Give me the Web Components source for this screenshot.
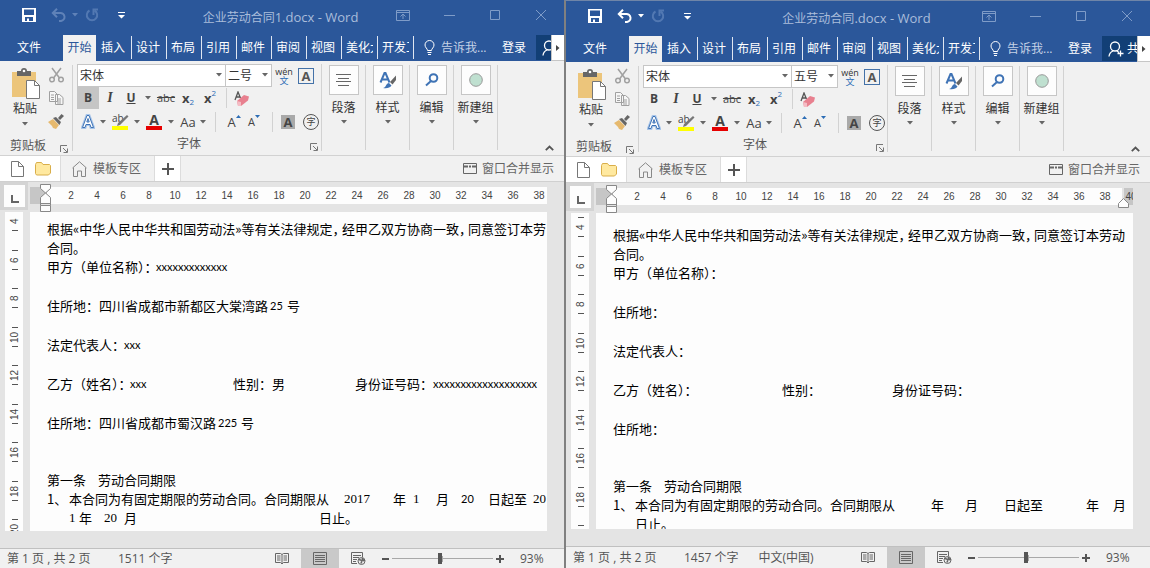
<!DOCTYPE html>
<html lang="zh-CN">
<head>
<meta charset="utf-8">
<title>Word</title>
<style>
  html, body { height: 100%; }
  body {
    margin: 0;
    background: #808080;
    font-family: "Open Sans", "Noto Sans CJK SC", sans-serif;
    font-size: 12px;
    line-height: 16px;
    color: #444;
  }
</style>
</head>
<body>
<split-desktop>
  <word-window name="企业劳动合同" suffix="1.docx - Word" size="二号" words="1511 个字" bold>
    <doc-line tight cols="295 126 auto"><span>根据«中华人民中华共和国劳动法»等有关法律规定，</span><span>经甲乙双方协商一致，</span><span>同意签订本劳</span></doc-line>
    <doc-line>合同。</doc-line>
    <doc-line cols="109 auto"><span>甲方（单位名称）：</span><latin-text>xxxxxxxxxxxxx</latin-text></doc-line>
    <doc-line blank></doc-line>
    <doc-line cols="223 17 auto"><span>住所地：四川省成都市新都区大棠湾路</span><latin-text>25</latin-text><span>号</span></doc-line>
    <doc-line blank></doc-line>
    <doc-line cols="77 auto"><span>法定代表人：</span><latin-text>xxx</latin-text></doc-line>
    <doc-line blank></doc-line>
    <doc-line cols="83 103 39 83 78 auto"><span>乙方（姓名）：</span><latin-text>xxx</latin-text><span>性别：</span><span>男</span><span>身份证号码：</span><latin-text>xxxxxxxxxxxxxxxxxxx</latin-text></doc-line>
    <doc-line blank></doc-line>
    <doc-line cols="171 23 auto"><span>住所地：四川省成都市蜀汉路</span><latin-text>225</latin-text><span>号</span></doc-line>
    <doc-line></doc-line>
    <doc-line></doc-line>
    <doc-line cols="51 auto"><span>第一条</span><span>劳动合同期限</span></doc-line>
    <doc-line cols="22 275 49 20 23 25 27 45 auto"><span>1、</span><span>本合同为有固定期限的劳动合同。合同期限从</span><serif-text>2017</serif-text><span>年</span><serif-text>1</serif-text><span>月</span><latin-text>20</latin-text><span>日起至</span><serif-text>20</serif-text></doc-line>
    <doc-line cols="22 10 25 20 195 auto"><span></span><serif-text>1</serif-text><span>年</span><serif-text>20</serif-text><span>月</span><span>日止。</span></doc-line>
  </word-window>
  <word-window class="active" name="企业劳动合同" suffix=".docx - Word" size="五号" words="1457 个字" language="中文(中国)" undoable wide>
    <doc-line tight cols="295 126 auto"><span>根据«中华人民中华共和国劳动法»等有关法律规定，</span><span>经甲乙双方协商一致，</span><span>同意签订本劳动</span></doc-line>
    <doc-line>合同。</doc-line>
    <doc-line>甲方（单位名称）：</doc-line>
    <doc-line blank></doc-line>
    <doc-line>住所地：</doc-line>
    <doc-line blank></doc-line>
    <doc-line>法定代表人：</doc-line>
    <doc-line blank></doc-line>
    <doc-line cols="169 110 auto"><span>乙方（姓名）：</span><span>性别：</span><span>身份证号码：</span></doc-line>
    <doc-line blank></doc-line>
    <doc-line>住所地：</doc-line>
    <doc-line></doc-line>
    <doc-line></doc-line>
    <doc-line cols="51 auto"><span>第一条</span><span>劳动合同期限</span></doc-line>
    <doc-line cols="22 296 34 39 82 27 auto"><span>1、</span><span>本合同为有固定期限的劳动合同。合同期限从</span><span>年</span><span>月</span><span>日起至</span><span>年</span><span>月</span></doc-line>
    <doc-line cols="22 auto"><span></span><span>日止。</span></doc-line>
  </word-window>
</split-desktop>

<script>
/* Shared reset for every shadow root */
const RESET = `
  *, *::before, *::after { box-sizing: border-box; }
  :host { box-sizing: border-box; }
  button { font: inherit; color: inherit; background: none; border: 0; padding: 0; margin: 0; display: flex; align-items: center; justify-content: center; }
  svg { display: block; flex: none; }
  a { color: inherit; text-decoration: none; }
`;

class Base extends HTMLElement {
  constructor() {
    super();
    this.attachShadow({ mode: 'open' });
  }
  connectedCallback() {
    this.shadowRoot.innerHTML = `<style>${RESET}${this.css()}</style>${this.html()}`;
  }
  css() { return ''; }
  html() { return '<slot></slot>'; }
}

const caret = (color = '#666') => `<svg width="6" height="4" viewBox="0 0 6 4"><path d="M0 0h6L3 3.5z" fill="${color}"/></svg>`;
const launcher = '<svg class="launch" width="8" height="8" viewBox="0 0 8 8" fill="none" stroke="#777"><path d="M.5 7V.5H7M3 3l4 4M7.500 3.500v4h-4"/></svg>';

customElements.define('split-desktop', class extends Base {
  css() { return `
    :host { display: grid; grid-template-columns: 564fr 586fr; height: 100vh; overflow: hidden; }
    ::slotted(*) { min-width: 0; min-height: 0; }
    ::slotted(.active) { border-left: 2px solid #808080; border-top: 1px solid #6f85a8; --scroll: 5px; --status-height: 22px; }
  `; }
});

customElements.define('word-window', class extends Base {
  css() { return `
    :host { display: flex; flex-direction: column; background: #e4e4e4; overflow: hidden; }
    word-canvas { flex: 1; min-height: 0; }
  `; }
  html() {
    const a = n => this.getAttribute(n) || '';
    return `
      <title-bar name="${a('name')}" suffix="${a('suffix')}" ${this.hasAttribute('undoable') ? 'undoable' : ''}></title-bar>
      <ribbon-tabs></ribbon-tabs>
      <ribbon-panel size="${a('size')}" ${this.hasAttribute('bold') ? 'bold' : ''}></ribbon-panel>
      <document-tabs></document-tabs>
      <word-canvas ${this.hasAttribute('wide') ? 'wide' : ''}><slot></slot></word-canvas>
      <status-bar words="${a('words')}" language="${a('language')}"></status-bar>`;
  }
});

customElements.define('title-bar', class extends Base {
  css() { return `
    :host { display: grid; grid-template-columns: 1fr auto 1fr; height: 35px; background: #2b579a; color: #aabddb; }
    .quick { display: flex; align-items: center; height: 30px; padding-left: 18px; }
    .quick button { width: 22px; height: 22px; }
    .quick .undo { margin-left: 7px; }
    .quick .drop { width: 12px; }
    .quick .more { margin-left: 7px; }
    h1 { margin: 0; padding-right: 3px; font-size: 12px; font-weight: 400; line-height: 35px; white-space: nowrap; }
    h1 span { font-size: 13px; }
    .win { display: flex; justify-content: flex-end; height: 30px; }
    .win button { width: 46px; flex: none; }
  `; }
  html() {
    const u = this.hasAttribute('undoable') ? '#fff' : '#5f82b8';
    return `
    <div class="quick">
      <button aria-label="保存"><svg width="14" height="14" viewBox="0 0 14 14"><path fill="#fff" fill-rule="evenodd" d="M0 0h14v14H0zM2 1.500v5.500h10V1.500zM3 9v4h2v-2.500h2V13h4V9z"/></svg></button>
      <button class="undo" aria-label="撤消"><svg width="15" height="14" viewBox="0 0 15 14" fill="none" stroke="${u}" stroke-width="2"><path d="M2 5h7a4 4 0 0 1 1 8H8"/><path d="M6 .8L1.800 5 6 9.200"/></svg></button>
      <button class="drop" aria-label="撤消列表">${caret(u)}</button>
      <button aria-label="重复"><svg width="14" height="14" viewBox="0 0 14 14" fill="none" stroke="#5278b2" stroke-width="2"><path d="M4.500 2.500a5.200 5.200 0 1 0 5 0"/><path d="M8.500 7V1.500H13"/></svg></button>
      <button class="more" aria-label="自定义快速访问工具栏"><svg width="7" height="7" viewBox="0 0 7 7" fill="#fff"><path d="M0 0h7v1H0zM0 3h7L3.500 6.500z"/></svg></button>
    </div>
    <h1>${this.getAttribute('name')}<span>${this.getAttribute('suffix')}</span></h1>
    <div class="win">
      <button aria-label="功能区显示选项"><svg width="14" height="11" viewBox="0 0 14 11" fill="none" stroke="#7f9cc8"><path d="M.5.5h13v10H.5zM.5 2.500h13M7 9V4M4.500 6.500L7 4l2.500 2.500"/></svg></button>
      <button aria-label="最小化"><svg width="11" height="10" viewBox="0 0 11 10" stroke="#7f9cc8"><path d="M0 5.500h11"/></svg></button>
      <button aria-label="最大化"><svg width="10" height="10" viewBox="0 0 10 10" fill="none" stroke="#7f9cc8"><path d="M.5.5h9v9h-9z"/></svg></button>
      <button aria-label="关闭"><svg width="10" height="10" viewBox="0 0 10 10" stroke="#7f9cc8"><path d="M0 0l10 10M10 0L0 10"/></svg></button>
    </div>`;
  }
});

customElements.define('ribbon-tabs', class extends Base {
  css() { return `
    :host { display: flex; height: 26px; background: #2b579a; color: #fff; white-space: nowrap; overflow: hidden; line-height: 25px; }
    a, button { flex: none; }
    .file { width: 63px; padding-left: 17px; }
    .on { width: 33px; background: #f1f1f1; color: #2b579a; text-align: center; }
    nav { display: flex; flex: none; }
    nav .t { width: 35px; padding-left: 4px; padding-right: 4px; overflow: hidden; border-right: 1px solid #dfe6f1; height: 23px; margin-top: 1px; line-height: 23px; }
    nav .t.first { width: 36px; padding-left: 5px; }
    nav .t.cut { width: 36px; }
    nav .t span { display: block; overflow: hidden; }
    .tell { display: flex; align-items: center; justify-content: flex-start; gap: 6px; padding-left: 10px; width: 82px; color: #c5d2e6; height: 25px; }
    .login { width: 40px; height: 25px; justify-content: flex-start; padding-left: 6px; }
    .share { flex: 1 1 0; min-width: 0; display: flex; justify-content: flex-start; gap: 3px; padding-left: 6px; background: #123f76; overflow: hidden; height: 25px; }
    .share span { flex: none; }
    .next { width: 13px; background: #fff; border: 1px solid #c6c6c6; border-width: 0 0 1px 1px; }
  `; }
  html() {
    const tabs = ['插入', '设计', '布局', '引用', '邮件', '审阅', '视图', '美化大', '开发工'];
    return `
    <nav>
      <a href="#file" class="file">文件</a><a href="#home" class="on">开始</a>
      ${tabs.map((t, i) => `<a href="#t${i}" class="t ${i === 0 ? 'first' : ''} ${i > 6 ? 'cut' : ''}"><span>${t}</span></a>`).join('')}
    </nav>
    <button class="tell"><svg width="11" height="15" viewBox="0 0 11 15" fill="none" stroke="#fff"><path d="M3.500 10.500c0-2-2.500-2.800-2.500-5.500a4.500 4.500 0 0 1 9 0c0 2.700-2.500 3.500-2.500 5.500zM3.500 12.500h4M4 14.500h3"/></svg>告诉我...</button>
    <button class="login">登录</button>
    <button class="share"><svg width="16" height="16" viewBox="0 0 16 16" fill="none" stroke="#fff" stroke-width="1.300"><circle cx="7" cy="5.500" r="4.500"/><path d="M1 15.500c.3-3 1.800-4.600 4-5.500M9 10l2 1.500M12.500 9.500v6M9.500 12.500h6"/></svg><span>共享</span></button>
    <button class="next" aria-label="更多选项卡"><svg width="4" height="6" viewBox="0 0 4 6"><path d="M0 0v6l3.500-3z" fill="#444"/></svg></button>`;
  }
});

/* One collapsed ribbon group: icon tile, label, arrow */
customElements.define('group-button', class extends Base {
  css() { return `
    :host { display: block; width: 44px; height: 85px; border-right: 1px solid #d2d2d2; flex: none; }
    button { flex-direction: column; width: 43px; white-space: nowrap; color: #333; }
    .tile { width: 30px; height: 30px; background: #fdfdfd; border: 1px solid #c6c6c6; display: flex; align-items: center; justify-content: center; margin-bottom: 5px; }
    .label { margin-bottom: 4px; }
  `; }
  html() { return `<button><span class="tile"><slot></slot></span><span class="label">${this.getAttribute('label')}</span>${caret()}</button>`; }
});

customElements.define('ribbon-panel', class extends Base {
  css() { return `
    :host { display: flex; height: 95px; background: #f1f1f1; border-bottom: 1px solid #d2d2d2; padding-top: 4px; }
    .clip { width: 73px; height: 86px; border-right: 1px solid #d2d2d2; display: grid; grid-template-columns: 48px 1fr; grid-template-rows: 70px 1fr; flex: none; color: #333; }
    .paste { flex-direction: column; justify-content: flex-start; padding: 3px 0 0 2px; }
    .paste span { margin: 2px 0 5px; }
    .mini { display: flex; flex-direction: column; gap: 7px; padding-top: 2px; align-items: center; padding-right: 8px; }
    .mini button { width: 16px; height: 16px; }
    .foot { display: flex; align-items: center; justify-content: space-between; color: #555; padding-top: 1px; }
    .foot .launch { align-self: flex-end; }
    .clip .foot { grid-column: 1 / 3; padding-left: 10px; padding-right: 4px; }
    .clip .launch { margin-bottom: 1px; }
    .font { width: 249px; height: 87px; border-right: 1px solid #d2d2d2; flex: none; padding-left: 4px; margin-top: -1px; }
    .row { display: flex; align-items: center; }
    .r1 { height: 23px; } .r2 { height: 22px; } .r3 { height: 25px; }
    .pick { position: relative; flex: none; }
    .pick svg { position: absolute; right: 4px; top: 9px; pointer-events: none; }
    select { appearance: none; font: inherit; font-size: 12px; color: #333; width: 100%; height: 23px; background: #fff; border: 1px solid #c6c6c6; border-radius: 0; padding: 0 2px; margin: 0; display: block; }
    .name { width: 149px; } .size { width: 47px; margin-left: -1px; }
    .py { width: 18px; margin-left: 3px; flex-direction: column; font-size: 9px; line-height: 9px; color: #333; }
    .py b { font-weight: 400; color: #2b6cb5; }
    .box { width: 16px; height: 16px; border: 1px solid #4472a8; margin-left: 5px; font-weight: 700; font-size: 13px; line-height: 14px; color: #555; }
    .g { height: 22px; flex: none; color: #444; }
    .w8 { width: 8px; } .w14 { width: 14px; } .w20 { width: 20px; } .w22 { width: 22px; } .w26 { width: 26px; }
    .pressed { background: #c5c5c5; }
    .b { font-weight: 700; } .i { font-style: italic; font-family: "Liberation Serif", serif; font-size: 14px; font-weight: 700; } .u { font-weight: 700; text-decoration: underline; }
    .s { text-decoration: line-through; font-size: 11px; }
    .x { font-weight: 700; font-size: 13px; }
    .x small { font-size: 8px; line-height: 8px; color: #2b6cb5; font-weight: 400; }
    .x .sub { align-self: flex-end; margin-bottom: 3px; } .x .sup { align-self: flex-start; margin-top: 2px; }
    .sep { width: 1px; height: 20px; background: #d2d2d2; flex: none; margin: 0 5px; }
    .sep.roomy { margin: 0 8px; }
    .red { flex-direction: column; font-weight: 700; font-size: 14px; line-height: 12px; }
    .red::after { content: ""; width: 16px; height: 4px; background: #e60000; }
    .case { font-size: 13px; margin-left: 2px; }
    .grow { font-size: 13px; }
    .grow.small { font-size: 11px; }
    .grow svg { align-self: flex-start; margin-top: 4px; }
    .shade { width: 14px; height: 14px; background: #a9a9a9; font-weight: 700; font-size: 13px; line-height: 14px; color: #444; margin: 0 8px 0 0; flex: none; }
    .ring { width: 16px; height: 16px; border: 1px solid #555; border-radius: 8px; font-size: 9px; line-height: 14px; color: #444; flex: none; }
    .font .foot { height: 17px; padding: 1px 3px 0 100px; }
    .foot span { margin-top: 2px; }
    .fold { margin-left: auto; align-self: flex-end; margin-right: 10px; margin-bottom: 4px; flex: none; }
  `; }
  html() {
    const size = this.getAttribute('size');
    return `
    <div class="clip">
      <button class="paste"><svg width="29" height="31" viewBox="0 0 29 31"><path fill="#ecc57b" d="M1 4h24v25H1z"/><path fill="#666" d="M6 3h4a3 3 0 0 1 6 0h4v5H6z"/><circle cx="13" cy="3" r="1.300" fill="#fff"/><path fill="#fff" stroke="#777" d="M15.500 12.500h8l5 5v13h-13z"/><path d="M23.500 12.500v5h5" fill="none" stroke="#777"/></svg><span>粘贴</span>${caret()}</button>
      <div class="mini">
        <button aria-label="剪切"><svg width="15" height="16" viewBox="0 0 15 16" fill="none" stroke="#a0a0a0" stroke-width="1.500"><circle cx="3" cy="12.500" r="2.300"/><circle cx="12" cy="12.500" r="2.300"/><path d="M3 1l7.500 10M12 1L4.500 11"/></svg></button>
        <button aria-label="复制"><svg width="16" height="14" viewBox="0 0 16 14" fill="#f6f6f6" stroke="#a0a0a0"><path d="M1.500.5h5l3 3v7h-8zM7.500 3.500h4l3.500 3v7H7.500zM3 4h3M3 6.500h3M3 8.500h3M9 8h4M9 10h4M9 12h4"/></svg></button>
        <button aria-label="格式刷"><svg width="16" height="15" viewBox="0 0 16 15"><path fill="#e6b96e" d="M0 8l5-3 6 6-3 4-3-1-1-2z"/><path fill="#666" d="M5 4l3-1 5 5-1.500 3zM10 4l3.500-4L16 2l-4 4z"/></svg></button>
      </div>
      <div class="foot"><span>剪贴板</span>${launcher}</div>
    </div>
    <div class="font">
      <div class="row r1">
        <div class="pick name"><select aria-label="字体"><option>宋体</option></select>${caret()}</div>
        <div class="pick size"><select aria-label="字号"><option>${size}</option></select>${caret()}</div>
        <button class="py"><span>wén</span><b>文</b></button>
        <button class="box">A</button>
      </div>
      <div class="row r2">
        <button class="g w22 b ${this.hasAttribute('bold') ? 'pressed' : ''}">B</button>
        <button class="g w22 i">I</button><button class="g w20 u">U</button><button class="g w14" aria-label="下划线样式">${caret()}</button>
        <button class="g w22 s">abc</button>
        <button class="g w22 x">x<small class="sub">2</small></button><button class="g w22 x">x<small class="sup">2</small></button>
        <span class="sep"></span>
        <button class="g w20" aria-label="清除格式"><svg width="16" height="15" viewBox="0 0 16 15"><path d="M1 9l3-8 2.500 6M2 6h4" fill="none" stroke="#555" stroke-width="1.300"/><path fill="#e8808f" d="M3 10l7-6 5 1.500-1 4L7 15H4z"/><path fill="#f4bcc4" d="M3 10l4 1v4H4z"/></svg></button>
      </div>
      <div class="row r3">
        <button class="g w22" aria-label="文本效果"><svg width="14" height="15" viewBox="0 0 14 15"><path d="M1.500 13.500L6 1.500h2l4.500 12h-2.500l-1-3H5l-1 3zM5.800 8h2.400L7 4.500z" fill="#fff" stroke="#a9c6ea" stroke-width="3"/><path d="M1.500 13.500L6 1.500h2l4.500 12h-2.500l-1-3H5l-1 3zM5.800 8h2.400L7 4.500z" fill="#fff" stroke="#3f73b5"/></svg></button>
        <button class="g w8" aria-label="文本效果列表">${caret()}</button>
        <button class="g w26" aria-label="突出显示"><svg width="18" height="17" viewBox="0 0 18 17"><path fill="#ff0" d="M1 13h16v4H1z"/><text x="1" y="9" font-family="Open Sans" font-size="10" fill="#444">ab</text><path fill="#777" d="M16 2l1.500 1.500L9 12l-3 1 1-3z"/></svg></button>
        <button class="g w8" aria-label="突出显示颜色">${caret()}</button>
        <button class="g w26 red">A</button><button class="g w8" aria-label="字体颜色">${caret()}</button>
        <button class="g w22 case">Aa</button><button class="g w8" aria-label="更改大小写">${caret()}</button>
        <span class="sep roomy"></span>
        <button class="g w20 grow">A<svg width="5" height="3" viewBox="0 0 5 3"><path d="M0 3h5L2.500 0z" fill="#2b6cb5"/></svg></button>
        <button class="g w20 grow small">A<svg width="5" height="3" viewBox="0 0 5 3"><path d="M0 0h5L2.500 3z" fill="#2b6cb5"/></svg></button>
        <span class="sep roomy"></span>
        <button class="shade">A</button><button class="ring">字</button>
      </div>
      <div class="foot"><span>字体</span>${launcher}</div>
    </div>
    <group-button label="段落"><svg width="15" height="12" viewBox="0 0 15 12" stroke="#666"><path d="M0 .5h15M2 4.500h11M0 7.500h15M2 11.500h11"/></svg></group-button>
    <group-button label="样式"><svg width="18" height="18" viewBox="0 0 18 18"><path d="M1.500 11.500L5.500 2h1l4 9.500M3 8.500h6" fill="none" stroke="#3f73b5" stroke-width="2"/><path d="M4 17c3 0 3-5 6-5l2.500 2.500C11 17 8 17.500 4 17z" fill="#3f73b5"/><path d="M11 11l6-6.500V9l-3.500 4.500z" fill="#666"/></svg></group-button>
    <group-button label="编辑"><svg width="14" height="14" viewBox="0 0 14 14" fill="none" stroke="#3f73b5" stroke-width="2"><circle cx="8.500" cy="5" r="3.800"/><path d="M6 8L1 12.500"/></svg></group-button>
    <group-button label="新建组"><svg width="14" height="14" viewBox="0 0 14 14"><circle cx="7" cy="7" r="6.300" fill="#bfe0d0" stroke="#999"/></svg></group-button>
    <button class="fold" aria-label="折叠功能区"><svg width="9" height="6" viewBox="0 0 9 6" fill="none" stroke="#555" stroke-width="1.800"><path d="M.8 5.200l3.700-3.700 3.700 3.700"/></svg></button>`;
  }
});

customElements.define('document-tabs', class extends Base {
  css() { return `
    :host { display: flex; height: 26px; background: #f1f1f1; border-bottom: 1px solid #d0d0d0; color: #666; white-space: nowrap; }
    .files { display: flex; align-items: center; gap: 11px; width: 61px; background: #fff; border-right: 1px solid #dcdcdc; padding-left: 11px; flex: none; }
    .home { display: flex; align-items: center; gap: 6px; width: 93px; padding-left: 11px; flex: none; }
    .add { width: 27px; background: #fff; border: 1px solid #dcdcdc; border-width: 0 1px; flex: none; }
    .merge { margin-left: auto; gap: 5px; padding-right: 10px; }
  `; }
  html() { return `
    <div class="files">
      <button aria-label="新建"><svg width="13" height="16" viewBox="0 0 13 16" fill="#fff" stroke="#777"><path d="M.5.5h7l5 5v10H.5zM7.500.5v5h5"/></svg></button>
      <button aria-label="打开"><svg width="16" height="14" viewBox="0 0 16 14"><path d="M.5 2.500v9l1 1.500h12l2-2V3.500l-1-1H8l-1.500-2h-5z" fill="#ffe9a0" stroke="#d9ae4a"/></svg></button>
    </div>
    <a class="home" href="#templates"><svg width="15" height="16" viewBox="0 0 15 16" fill="none" stroke="#888"><path d="M1.500 6.500v9h4v-5.500h4v5.500h4v-9M.5 7L7.500.8l7 6.200"/></svg>模板专区</a>
    <button class="add" aria-label="新标签"><svg width="12" height="12" viewBox="0 0 12 12" stroke="#555" stroke-width="2"><path d="M0 6h12M6 0v12"/></svg></button>
    <button class="merge"><svg width="14" height="11" viewBox="0 0 14 11" fill="none" stroke="#666"><path d="M.5.5h13v10H.5z"/><path d="M1 3.500h4M6 3.500h2M9 3.500h4" stroke-width="2"/></svg>窗口合并显示</button>`; }
});

customElements.define('word-canvas', class extends Base {
  css() { return `
    :host { display: grid; grid-template-columns: 30px 1fr; grid-template-rows: 30px 1fr; padding: 0 17px 17px 0; overflow: hidden; }
    .corner { width: 28px; height: 28px; border: 3px solid #d4d4d4; border-left-width: 4px; background: #fdfdfd; display: flex; align-items: flex-end; justify-content: center; padding-bottom: 4px; }
    .page { background: #fdfdfd; overflow: hidden; padding: calc(7px + var(--scroll, 0px)) 0 0 17px; min-height: 0; min-width: 0; }
    ruler-v { margin-left: 5px; min-height: 0; }
    ruler-h { min-width: 0; }
  `; }
  html() { return `
    <div class="corner"><svg width="8" height="8" viewBox="0 0 8 8" fill="none" stroke="#666" stroke-width="2"><path d="M1 0v7h7"/></svg></div>
    <ruler-h ${this.hasAttribute('wide') ? 'wide' : ''}></ruler-h>
    <ruler-v></ruler-v>
    <div class="page"><slot></slot></div>`; }
});

customElements.define('ruler-h', class extends Base {
  css() { return `
    :host { display: block; position: relative; padding-top: 5px; font: 10px/17px "Liberation Sans", sans-serif; color: #444; }
    .bar { display: flex; height: 17px; background: #fdfdfd; overflow: hidden; border-left: 17px solid #c6c6c6; padding-left: 11px; }
    .wide { background: linear-gradient(to left, #c6c6c6 9px, #e4e4e4 9px, #e4e4e4 11px, #fdfdfd 11px); }
    .bar span { width: 26px; flex: none; text-align: center; }
    .start { position: absolute; left: 10px; top: 2px; }
    .end { position: absolute; right: 3px; top: 15px; }
  `; }
  html() {
    const wide = this.hasAttribute('wide');
    const n = wide ? 20 : 19;
    return `<div class="bar ${wide ? 'wide' : ''}">${Array.from({ length: n }, (_, i) => `<span>${i * 2 + 2}</span>`).join('')}</div>
    <svg class="start" width="12" height="28" viewBox="0 0 12 28" fill="#fdfdfd" stroke="#888"><path d="M.5.5h10v4l-5 4.500-5-4.500zM.5 19.500v-6l5-4.500 5 4.500v6zM.5 21.500h10v6H.5z"/><path d="M.5 17.500v4M10.500 17.500v4"/></svg>
    ${wide ? '<svg class="end" width="12" height="10" viewBox="0 0 12 10" fill="#fdfdfd" stroke="#888"><path d="M.5 9.500v-4l5-5 5 5v4z"/></svg>' : ''}`;
  }
});

customElements.define('ruler-v', class extends Base {
  css() { return `
    :host { display: block; width: 18px; background: #fdfdfd; overflow: hidden; font: 10px/12px "Liberation Sans", sans-serif; color: #444; }
    .scale { padding-top: var(--scroll, 0px); padding-left: 7px; margin-top: -1px; }
    .cell { height: 39px; padding-bottom: 19px; }
    .cell:nth-child(even) { height: 38px; padding-bottom: 18px; }
    span { display: flex; align-items: center; justify-content: center; width: 6px; height: 20px; border: solid #555; border-width: 1px 0; writing-mode: vertical-rl; transform: rotate(180deg); }
  `; }
  html() {
    const last = this.getRootNode().host.hasAttribute('wide') ? '' : '20';
    return `<div class="scale">${[4, 6, 8, 10, 12, 14, 16, 18, last].map(n => `<div class="cell"><span>${n}</span></div>`).join('')}</div>`;
  }
});

/* A paragraph line; cols lists the widths of its runs in pixels */
customElements.define('doc-line', class extends Base {
  css() {
    const cols = (this.getAttribute('cols') || 'auto').split(' ').map(c => c === 'auto' ? c : c + 'px').join(' ');
    return `
    :host { display: grid; grid-template-columns: ${cols}; justify-content: start; height: 19px; line-height: 19px; font-size: 13px; color: #000; white-space: nowrap; font-family: "Noto Sans CJK SC", sans-serif; }
    :host([blank]) { height: 20px; }
    :host([tight]) { font-feature-settings: "halt"; }
  `; }
});

customElements.define('latin-text', class extends Base {
  css() { return ':host { display: block; font-family: Lato, sans-serif; font-size: 11px; }'; }
});

customElements.define('serif-text', class extends Base {
  css() { return ':host { display: block; font-family: "Liberation Serif", serif; font-size: 13px; }'; }
});

customElements.define('status-bar', class extends Base {
  css() { return `
    :host { display: flex; align-items: stretch; height: var(--status-height, 20px); background: #f1f1f1; border-top: 1px solid #c0c0c0; color: #555; white-space: nowrap; }
    .text { display: flex; align-items: center; gap: 20px; padding-left: 7px; }
    .text .pages { width: 91px; }
    .view { display: flex; margin-left: auto; }
    .view button { width: 38px; }
    .view .on { background: #c9c9c9; }
    .zoom { display: flex; align-items: center; padding-left: 5px; gap: 3px; }
    input { appearance: none; width: 101px; height: 12px; margin: 0; background: linear-gradient(#a8a8a8, #a8a8a8) center / 100% 1px no-repeat, linear-gradient(#a8a8a8, #a8a8a8) center / 1px 6px no-repeat; }
    input::-webkit-slider-thumb { appearance: none; width: 4px; height: 11px; background: #555; border-radius: 0; }
    .pct { width: 44px; margin-left: 13px; justify-content: flex-start; }
  `; }
  html() {
    const lang = this.getAttribute('language');
    return `
    <div class="text"><span class="pages">第 1 页 , 共 2 页</span><span>${this.getAttribute('words')}</span>${lang ? `<span>${lang}</span>` : ''}</div>
    <div class="view">
      <button aria-label="阅读视图"><svg width="14" height="13" viewBox="0 0 14 13" fill="none" stroke="#666"><path d="M.5 1.500h5L7 2.500l1.500-1h5v9h-5L7 12l-1.500-1.500h-5zM7 2.500V12M2 4h3.500M2 6h3.500M2 8h3.500M8.500 4H12M8.500 6H12M8.500 8H12"/></svg></button>
      <button class="on" aria-label="页面视图"><svg width="14" height="13" viewBox="0 0 14 13" fill="none" stroke="#666"><path d="M.5.5h13v12H.5zM2 3.500h10M2 5.500h10M2 7.500h10M2 9.500h10"/></svg></button>
      <button aria-label="Web 版式"><svg width="15" height="13" viewBox="0 0 15 13" fill="none" stroke="#666"><path d="M11.500 5V.5H.5v11H6M2 3.500h8M2 5.500h6M2 7.500h4M2 9.500h3"/><circle cx="10.500" cy="9" r="3.500" fill="#eee"/><path d="M8 7.500l3 1-1 3M11 6l1.500 2.500L14 8" stroke-width="1.500"/></svg></button>
    </div>
    <div class="zoom">
      <button aria-label="缩小"><svg width="7" height="8" viewBox="0 0 7 8"><path d="M0 3h7v2H0z" fill="#555"/></svg></button>
      <input type="range" aria-label="显示比例" min="0" max="100" value="47">
      <button aria-label="放大"><svg width="8" height="8" viewBox="0 0 8 8"><path d="M0 3h3V0h2v3h3v2H5v3H3V5H0z" fill="#555"/></svg></button>
      <button class="pct">93%</button>
    </div>`;
  }
});
</script>
</body>
</html>
